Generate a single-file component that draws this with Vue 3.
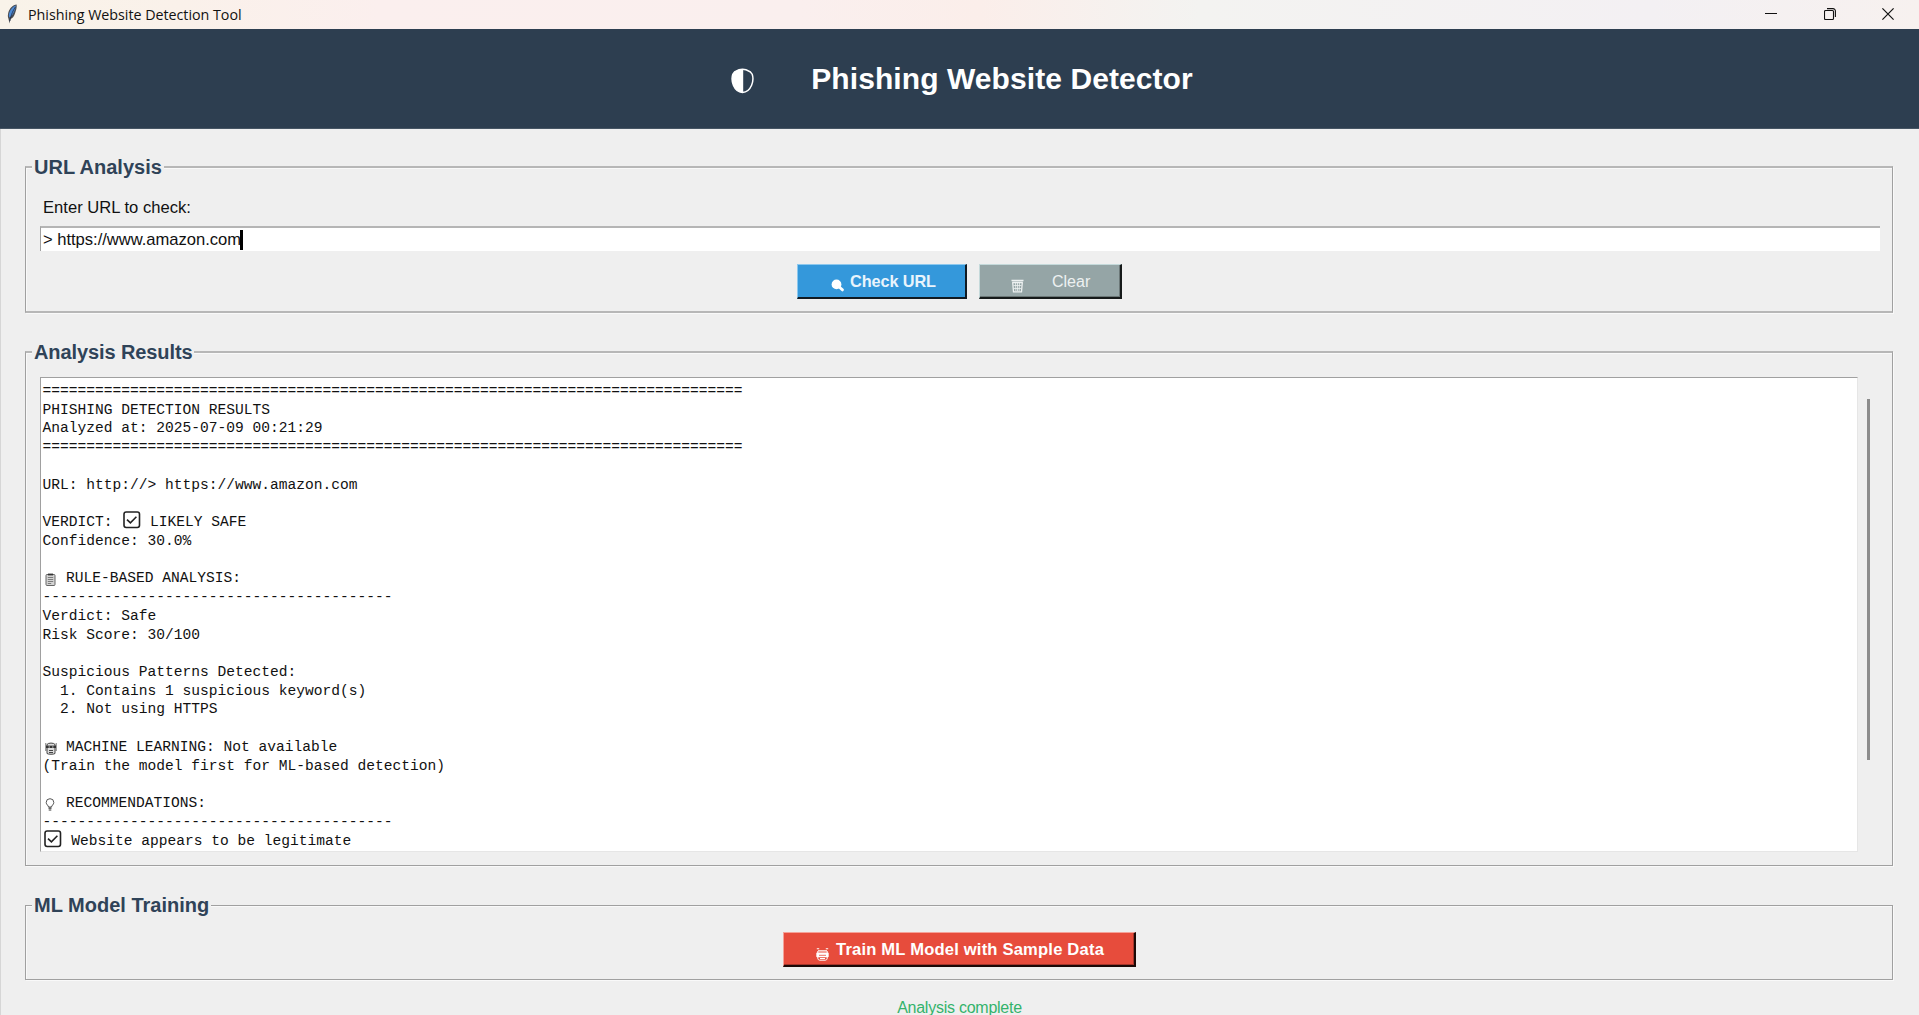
<script setup>
import { ref } from 'vue'

const url = ref('> https://www.amazon.com')
const wide = '='.repeat(80)
const rule = '-'.repeat(40)

const lines = [
  { text: wide },
  { text: 'PHISHING DETECTION RESULTS' },
  { text: 'Analyzed at: 2025-07-09 00:21:29' },
  { text: wide },
  { text: '' },
  { text: 'URL: http://> https://www.amazon.com' },
  { text: '' },
  { before: 'VERDICT: ', icon: 'check', text: ' LIKELY SAFE' },
  { text: 'Confidence: 30.0%' },
  { text: '' },
  { icon: 'clipboard', text: ' RULE-BASED ANALYSIS:' },
  { text: rule },
  { text: 'Verdict: Safe' },
  { text: 'Risk Score: 30/100' },
  { text: '' },
  { text: 'Suspicious Patterns Detected:' },
  { text: '  1. Contains 1 suspicious keyword(s)' },
  { text: '  2. Not using HTTPS' },
  { text: '' },
  { icon: 'robot', text: ' MACHINE LEARNING: Not available' },
  { text: '(Train the model first for ML-based detection)' },
  { text: '' },
  { icon: 'bulb', text: ' RECOMMENDATIONS:' },
  { text: rule },
  { icon: 'check', text: ' Website appears to be legitimate' },
]
</script>

<template>
  <div class="window">
    <div class="titlebar">
      <svg class="feather" width="12" height="20" viewBox="0 0 12 20">
        <path d="M10.6 .4C7 .6 3.6 4 2.4 8.300c-.6 2.300-.8 4.300 0 6.200l1.200 4.900.8-4.300c2.300-.8 3.800-3 4.600-5.600C9.900 6.600 11.200 3 10.600.4z" fill="#4a4d52" />
        <path d="M9.800 1.600C7 2.600 4.200 5.600 3.200 9c-.5 1.800-.4 3.200.2 4.600C6.600 12 9.400 6 9.800 1.600z" fill="#4d8bd6" />
        <path d="M9.400 3C7.400 6 5.200 10 3.900 17" fill="none" stroke="#1d2a44" stroke-width=".8" />
      </svg>
      <span class="caption">Phishing Website Detection Tool</span>
      <div class="controls">
        <svg width="12" height="12" viewBox="0 0 12 12"><path d="M0 5.500h12" stroke="#111" /></svg>
        <svg width="12" height="12" viewBox="0 0 12 12" fill="none" stroke="#111" stroke-width="1.100">
          <rect x=".5" y="2.500" width="9" height="9" rx="1" />
          <path d="M3 .6h6a2.400 2.400 0 0 1 2.400 2.400v6" />
        </svg>
        <svg width="12" height="12" viewBox="0 0 12 12"><path d="M.4.4l11.200 11.200M11.600.4L.4 11.600" stroke="#111" stroke-width="1.200" /></svg>
      </div>
    </div>

    <header class="header">
      <svg class="shield" width="23" height="26" viewBox="0 0 23 26">
        <path d="M11.500 1.200C9 1.200 8.800 1.600 7 2.200 5 2.900 2.800 4 1.800 6.200c-1 3-.9 7.400.6 11.100 1.600 3.800 5 7 9.100 7.300 4.100-.3 7.500-3.500 9.100-7.300 1.500-3.700 1.600-8.100.6-11.100C20.200 4 18 2.900 16 2.200c-1.800-.6-2-1-4.500-1z" fill="none" stroke="#fff" stroke-width="1.500" />
        <path d="M12.200 1C9 1 8.500 1.500 7 2.100 5 2.900 2.700 4 1.700 6.200c-1 3-.9 7.400.6 11.100 1.600 3.800 5 7.300 9.900 7.500z" fill="#fff" />
      </svg>
      <h1>Phishing Website Detector</h1>
    </header>

    <main>
      <section class="group url-group">
        <h2>URL Analysis</h2>
        <label class="prompt">Enter URL to check:</label>
        <div class="entry"><span>{{ url }}</span><i class="caret"></i></div>
        <div class="buttons">
          <button class="btn blue">
            <svg width="14" height="13" viewBox="0 0 14 13"><circle cx="5.500" cy="5.400" r="4.900" fill="#fff" /><path d="M8.500 8.200l3 2.700" stroke="#fff" stroke-width="2.800" stroke-linecap="round" /></svg>
            <span>Check URL</span>
          </button>
          <button class="btn gray">
            <svg width="13" height="14" viewBox="0 0 13 14" fill="none" stroke="#edf1f1">
              <path d="M.5 1.500h12M1.200 3.500h10.600" stroke-width="1.500" />
              <path d="M1.700 3.500l.8 9.300h8l.8-9.300" stroke-width="1.300" />
              <path d="M4.500 4l.4 8M6.500 4v8M8.500 4l-.4 8M2.500 6.500h8M2.700 9.500h7.600" stroke-width=".8" />
            </svg>
            <span>Clear</span>
          </button>
        </div>
      </section>

      <section class="group result-group">
        <h2>Analysis Results</h2>
        <div class="result-row">
          <div class="output">
            <div v-for="(line, i) in lines" :key="i" class="line"><span v-if="line.before">{{ line.before }}</span><span v-if="line.icon" class="glyph" :class="line.icon">
                <svg v-if="line.icon === 'check'" width="18" height="18" viewBox="0 0 18 18" fill="none" stroke="#222">
                  <rect x="1" y="1" width="15.500" height="15.500" rx="2.200" stroke-width="1.600" />
                  <path d="M4 8.600l3.400 3.300 6-6.200" stroke-width="1.600" />
                </svg>
                <svg v-else-if="line.icon === 'clipboard'" width="11" height="13" viewBox="0 0 11 13" fill="none" stroke="#666">
                  <rect x="1" y="1.500" width="9" height="11" rx="1" fill="#d4d4d4" />
                  <path d="M3 1.500h5" stroke="#333" stroke-width="1.800" />
                  <path d="M2.800 4.500h5.400M2.800 6.500h5.400M2.800 8.500h5.400M2.800 10.500h3.400" stroke-width=".8" />
                </svg>
                <svg v-else-if="line.icon === 'robot'" width="12" height="13" viewBox="0 0 12 13" fill="none" stroke="#333">
                  <path d="M.8 1v8M11.200 1v8" stroke="#777" />
                  <path d="M2 2.500C3 .6 9 .6 10 2.500V11.500c-1 1-7 1-8 0z" fill="#ddd" stroke-width=".9" />
                  <path d="M1 4.800h10" stroke-width="2.400" />
                  <path d="M3.600 5h1.200M7.200 5h1.200" stroke="#fff" stroke-width=".9" />
                  <path d="M4 8.500h4M4 10.500h4" stroke-width=".9" />
                </svg>
                <svg v-else width="10" height="13" viewBox="0 0 10 13" fill="none" stroke="#555">
                  <path d="M3.500 9C3.500 7.500 1.200 6.600 1.200 4.500a3.800 3.800 0 0 1 7.600 0C8.800 6.600 6.500 7.500 6.500 9z" />
                  <path d="M3.500 10.200h3M3.700 12h2.600" stroke="#333" stroke-width="1.200" />
                </svg>
              </span>{{ line.text }}</div>
          </div>
          <div class="scrollbar"><div class="thumb"></div></div>
        </div>
      </section>

      <section class="group train-group">
        <h2>ML Model Training</h2>
        <div class="buttons">
          <button class="btn red">
            <svg width="13" height="13" viewBox="0 0 13 13" fill="none" stroke="#fff">
              <path d="M.8 .8h2.400M9.800 .8h2.400M2 2.900h9" stroke-width="1.100" />
              <rect x=".3" y="4.600" width="12.400" height="4.600" rx=".8" fill="#fff" stroke="none" />
              <path d="M1.800 3v6M11.200 3v6" stroke-width="1" />
              <path d="M3 7.300h7" stroke="#e74c3c" stroke-width=".8" />
              <path d="M1.800 9v1.200c0 1.400 1 2 2 2h5.400c1 0 2-.6 2-2V9M4 10.500h5" stroke-width="1" />
            </svg>
            <span>Train ML Model with Sample Data</span>
          </button>
        </div>
      </section>

      <p class="status">Analysis complete</p>
    </main>
  </div>
</template>

<style>
body {
  margin: 0;
  overflow: hidden;
}
</style>

<style scoped>
.window {
  display: flex;
  flex-direction: column;
  width: 100%;
  height: 1015px;
  overflow: hidden;
  background: #efefef;
  font-family: "Liberation Sans", Arial, sans-serif;
  color: #111;
}
svg {
  display: block;
  flex: none;
}
.titlebar {
  display: flex;
  align-items: center;
  height: 29px;
  flex: none;
  box-sizing: border-box;
  padding: 0 25px 0 6px;
  background: linear-gradient(90deg, #f9f3e9 0, #faf1ea 180px, #fbefee 380px, #faefee 800px, #fbeeea 980px, #f3f3f1 1200px, #f3f0f3 1650px, #f7f1ef 1919px);
}
.feather {
  margin-top: -1px;
}
.caption {
  margin-left: 10px;
  font-family: "Open Sans", "Noto Sans", sans-serif;
  font-size: 14.300px;
  line-height: 28px;
  letter-spacing: -0.03px;
  white-space: nowrap;
}
.controls {
  display: flex;
  gap: 46.500px;
  margin: -1px 0 0 auto;
}
.header {
  display: flex;
  height: 100px;
  flex: none;
  box-sizing: border-box;
  justify-content: center;
  padding-left: 5px;
  background: #2d3e50;
  border-bottom: 1px solid #465564;
}
.shield {
  margin: 39px 57px 0 0;
}
h1 {
  margin: 32px 0 0;
  font-size: 30px;
  line-height: 36px;
  letter-spacing: 0.08px;
  color: #fff;
  white-space: nowrap;
}
main {
  display: flex;
  flex: 1;
  flex-direction: column;
  box-sizing: border-box;
  padding: 37px 26px 0 24px;
  border-left: 1px solid #d6d6d6;
}
.group {
  display: flex;
  flex: none;
  flex-direction: column;
  box-sizing: border-box;
  border: 1px solid #a0a0a0;
  box-shadow: 1px 1px 0 #f9f9f9, inset 1px 1px 0 #f9f9f9;
}
.url-group {
  height: 147px;
  border-top: 2px solid #b7b7b7;
  border-bottom: 2px solid #b7b7b7;
}
.result-group {
  height: 515px;
  margin-top: 38px;
  border-top: 2px solid #b7b7b7;
}
.train-group {
  height: 75px;
  margin-top: 39px;
}
h2 {
  width: max-content;
  height: 24px;
  margin: -13px 0 0 6px;
  padding: 0 2px;
  background: #efefef;
  font-size: 20px;
  line-height: 24px;
  letter-spacing: 0;
  color: #2f4358;
}
.result-group h2 {
  letter-spacing: -0.1px;
}
.prompt {
  margin: 19px 0 0 17px;
  font-size: 16.600px;
  line-height: 20px;
  letter-spacing: 0;
}
.entry {
  display: flex;
  align-items: center;
  height: 25px;
  box-sizing: border-box;
  margin: 8px 12px 0 14px;
  padding-left: 2px;
  background: #fff;
  border-top: 2px solid #b5b5b5;
  border-left: 1px solid #a0a0a0;
  font-size: 16.600px;
  letter-spacing: -0.03px;
}
.caret {
  width: 3px;
  height: 20px;
  margin-left: -1px;
  background: #000;
}
.buttons {
  display: flex;
  justify-content: center;
  gap: 12px;
  margin-top: 13px;
  padding-left: 1px;
}
.btn {
  display: flex;
  height: 35px;
  box-sizing: border-box;
  margin: 0;
  padding: 0;
  border: solid;
  border-width: 1px 2px 2px 1px;
  font-family: inherit;
  font-size: 16.300px;
  font-weight: bold;
  line-height: 33px;
  color: #fff;
  white-space: nowrap;
}
.blue {
  width: 170px;
  padding-left: 33px;
  background: #3498db;
  border-color: #8cc8ee #101a22 #101a22 #8cc8ee;
  color: #e9f4fc;
  letter-spacing: -0.1px;
}
.blue svg {
  margin: 14px 5px 0 0;
}
.gray {
  width: 143px;
  padding-left: 31px;
  background: #95a5a6;
  border-color: #c4d9da #161a1a #161a1a #c4d9da;
  box-shadow: inset -1px -1px 0 #6b7777;
  font-size: 16px;
  font-weight: normal;
  color: #edf1f1;
}
.gray svg {
  margin: 14px 28px 0 0;
}
.red {
  width: 353px;
  padding-left: 32px;
  background: #e74c3c;
  border-color: #f5a299 #1c0907 #1c0907 #f5a299;
  box-shadow: inset -1px -1px 0 #a5362b;
  font-size: 16.600px;
  letter-spacing: 0.18px;
}
.red svg {
  margin: 15px 7px 0 0;
}
.result-row {
  display: flex;
  margin: 13px 12px 0 14px;
}
.output {
  flex: 1;
  height: 475px;
  box-sizing: border-box;
  padding: 4px 0 0 1.600px;
  overflow: hidden;
  background: #fff;
  border: 1px solid #a0a0a0;
  border-right-color: #e6e6e6;
  border-bottom-color: #e6e6e6;
  font-family: "Liberation Mono", "Courier New", monospace;
  font-size: 14.580px;
  line-height: 18.740px;
}
.line {
  height: 18.740px;
  white-space: pre;
}
.glyph {
  display: inline-flex;
  width: 14.600px;
  height: 13px;
  box-sizing: border-box;
  padding-left: 2px;
  vertical-align: -4px;
}
.glyph.check {
  width: 20px;
  height: 17px;
  margin: -3px 0;
  padding-left: 1.500px;
  vertical-align: -3px;
}
.scrollbar {
  width: 22px;
  height: 475px;
}
.thumb {
  width: 3px;
  height: 361px;
  margin: 22px 0 0 9px;
  background: #8c8c8c;
}
.status {
  margin: 18px 0 0;
  padding-left: 1px;
  font-size: 16px;
  line-height: 20px;
  letter-spacing: -0.25px;
  text-align: center;
  color: #33b36b;
}
.train-group .buttons {
  margin-top: 15px;
}
</style>
